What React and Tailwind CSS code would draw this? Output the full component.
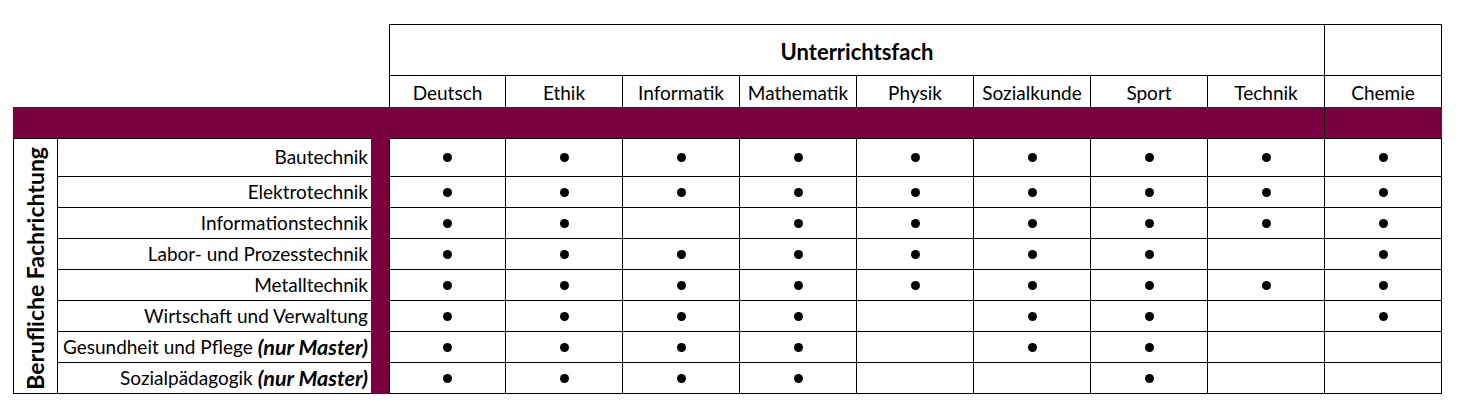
const subjects = [
  "Deutsch",
  "Ethik",
  "Informatik",
  "Mathematik",
  "Physik",
  "Sozialkunde",
  "Sport",
  "Technik",
  "Chemie",
];

// 1 = dot, 0 = empty, in the order of subjects above
const rows = [
  { name: "Bautechnik", marks: [1, 1, 1, 1, 1, 1, 1, 1, 1] },
  { name: "Elektrotechnik", marks: [1, 1, 1, 1, 1, 1, 1, 1, 1] },
  { name: "Informationstechnik", marks: [1, 1, 0, 1, 1, 1, 1, 1, 1] },
  { name: "Labor- und Prozesstechnik", marks: [1, 1, 1, 1, 1, 1, 1, 0, 1] },
  { name: "Metalltechnik", marks: [1, 1, 1, 1, 1, 1, 1, 1, 1] },
  { name: "Wirtschaft und Verwaltung", marks: [1, 1, 1, 1, 0, 1, 1, 0, 1] },
  { name: "Gesundheit und Pflege", master: true, marks: [1, 1, 1, 1, 0, 1, 1, 0, 0] },
  { name: "Sozialpädagogik", master: true, marks: [1, 1, 1, 1, 0, 0, 1, 0, 0] },
];

function Dot() {
  return <span className="block w-[9px] h-[9px] rounded-full bg-black" />;
}

export default function App() {
  return (
    <div
      className="bg-white text-black w-[1468px] h-[418px] pt-[24px] pl-[13px] text-[19px]"
      style={{ fontFamily: "Lato, 'Liberation Sans', sans-serif" }}
    >
      <div className="grid grid-cols-[45px_313px_18px_repeat(9,117px)] grid-rows-[52px_31px_31px_39px_repeat(7,31px)]">
        {/* header row 1 */}
        <div className="col-start-4 col-span-8 row-start-1 border border-black flex items-end justify-center pb-[7px] font-bold text-[22px]">
          Unterrichtsfach
        </div>
        <div className="col-start-12 row-start-1 border-t border-r border-b border-black" />

        {/* header row 2: subject names */}
        {subjects.map((s, i) => (
          <div
            key={s}
            className={`row-start-2 border-r border-black flex items-end justify-center pb-[1px] leading-none ${
              i === 0 ? "border-l" : ""
            }`}
            style={{ gridColumnStart: i + 4 }}
          >
            <span className="pb-[4px]">{s}</span>
          </div>
        ))}

        {/* purple band */}
        <div className="col-start-1 col-span-2 row-start-3 bg-[#7b0040]" />
        <div className="col-start-3 row-start-3 row-span-9 bg-[#7b0040]" />
        <div className="col-start-4 col-span-8 row-start-3 bg-[#7b0040] border-r border-black" />
        <div className="col-start-12 row-start-3 bg-[#7b0040]" />

        {/* vertical label */}
        <div className="col-start-1 row-start-4 row-span-8 border border-black flex items-center justify-center pt-[4px]">
          <span className="[writing-mode:vertical-rl] rotate-180 font-bold whitespace-nowrap text-[23px] leading-none">
            Berufliche Fachrichtung
          </span>
        </div>

        {rows.map((r, ri) => (
          <div key={r.name} className="contents">
            <div
              className={`col-start-2 border-b border-black flex items-center justify-end pr-[3px] whitespace-nowrap ${
                ri === 0 ? "border-t" : ""
              }`}
              style={{ gridRowStart: ri + 4 }}
            >
              {r.name}
              {r.master && (
                <>
                  &nbsp;<span className="font-bold italic text-[21.5px]">(nur Master)</span>
                </>
              )}
            </div>
            {r.marks.map((m, ci) => (
              <div
                key={ci}
                className={`border-r border-b border-black flex items-center justify-center ${
                  ri === 0 ? "border-t" : ""
                } ${ci === 0 ? "border-l" : ""}`}
                style={{ gridRowStart: ri + 4, gridColumnStart: ci + 4 }}
              >
                {m ? <Dot /> : null}
              </div>
            ))}
          </div>
        ))}
      </div>
    </div>
  );
}
